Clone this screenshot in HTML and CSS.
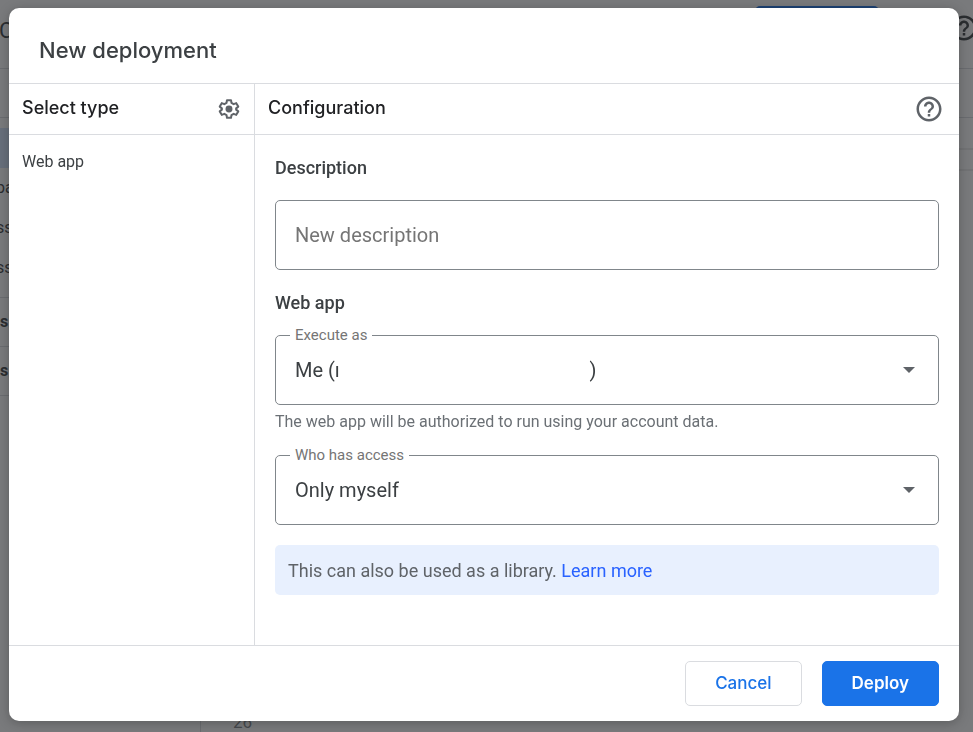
FILE: index.html
```html
<!DOCTYPE html>
<html lang="en">
<head>
    <meta charset="UTF-8">
    <meta name="viewport" content="width=device-width, initial-scale=1.0">
    <title>New deployment</title>
    <link rel="stylesheet" href="styles.css">
</head>
<body>
    <!-- Editor behind the dialog -->
    <div class="editor" aria-hidden="true">
        <div class="editor-header">
            <span class="editor-name">C</span>
            <span class="editor-deploy"></span>
            <svg class="help-icon" viewBox="0 0 24 24"><path d="M11 18h2v-2h-2v2zm1-16C6.480 2 2 6.480 2 12s4.480 10 10 10 10-4.480 10-10S17.520 2 12 2zm0 18c-4.410 0-8-3.590-8-8s3.590-8 8-8 8 3.590 8 8-3.590 8-8 8zm0-14c-2.210 0-4 1.790-4 4h2c0-1.100.9-2 2-2s2 .9 2 2c0 2-3 1.750-3 5h2c0-2.250 3-2.500 3-5 0-2.210-1.790-4-4-4z"/></svg>
        </div>
        <div class="editor-toolbar"></div>
        <div class="editor-main">
            <div class="files">
                <div class="file active"></div>
                <div class="file">pa</div>
                <div class="file">ss</div>
                <div class="file">ss</div>
                <div class="section">s</div>
                <div class="section">s</div>
            </div>
            <div class="code">
                <div class="code-bar"></div>
                <div class="line-number">26</div>
            </div>
        </div>
    </div>

    <!-- Deployment dialog -->
    <div class="overlay">
        <div class="dialog" role="dialog" aria-labelledby="dialog-title">
            <div class="dialog-header">
                <h1 id="dialog-title">New deployment</h1>
            </div>
            <div class="dialog-body">
                <div class="types">
                    <div class="column-header">
                        <h2>Select type</h2>
                        <button class="icon-button" aria-label="Enable deployment types">
                            <svg class="gear-icon" viewBox="0 0 24 24"><path d="M9.800 2.400h4.400l.5 2.900 2.400 1.400 2.800-1.100 2.200 3.800-2.300 1.900v1.400l2.300 1.900-2.200 3.800-2.800-1.100-2.400 1.400-.5 2.900H9.800l-.5-2.900-2.400-1.400-2.800 1.100-2.200-3.800 2.300-1.900v-1.400L1.900 9.400l2.200-3.800 2.800 1.100 2.400-1.400z" fill="none" stroke="currentColor" stroke-width="2.200" stroke-linejoin="round"/><circle cx="12" cy="12" r="3.800"/></svg>
                        </button>
                    </div>
                    <p class="type-name">Web app</p>
                </div>
                <div class="configuration">
                    <div class="column-header">
                        <h2>Configuration</h2>
                        <button class="icon-button" aria-label="Help">
                            <svg class="help-icon" viewBox="0 0 24 24"><path d="M11 18h2v-2h-2v2zm1-16C6.480 2 2 6.480 2 12s4.480 10 10 10 10-4.480 10-10S17.520 2 12 2zm0 18c-4.410 0-8-3.590-8-8s3.590-8 8-8 8 3.590 8 8-3.590 8-8 8zm0-14c-2.210 0-4 1.790-4 4h2c0-1.100.9-2 2-2s2 .9 2 2c0 2-3 1.750-3 5h2c0-2.250 3-2.500 3-5 0-2.210-1.790-4-4-4z"/></svg>
                        </button>
                    </div>
                    <form class="fields" id="deploy-form">
                        <label class="field-title" for="description">Description</label>
                        <input class="control" type="text" id="description" placeholder="New description">

                        <h3 class="field-title">Web app</h3>
                        <div class="select-field">
                            <label for="execute-as">Execute as</label>
                            <select class="control" id="execute-as">
                                <option>Me (ı&emsp;&emsp;&emsp;&emsp;&emsp;&emsp;&emsp;&emsp;&emsp;&emsp;&emsp;&emsp;&nbsp;)</option>
                            </select>
                            <svg class="arrow" viewBox="0 0 12 6"><path d="M0 0h12L6 6z"/></svg>
                        </div>
                        <p class="hint">The web app will be authorized to run using your account data.</p>
                        <div class="select-field">
                            <label for="access">Who has access</label>
                            <select class="control" id="access">
                                <option>Only myself</option>
                            </select>
                            <svg class="arrow" viewBox="0 0 12 6"><path d="M0 0h12L6 6z"/></svg>
                        </div>
                        <p class="notice">This can also be used as a library. <a href="#">Learn more</a></p>
                    </form>
                </div>
            </div>
            <div class="dialog-footer">
                <button class="btn btn-cancel" type="button">Cancel</button>
                <button class="btn btn-deploy" type="submit" form="deploy-form">Deploy</button>
            </div>
        </div>
    </div>
</body>
</html>
```
FILE: styles.css
```css
* {
    box-sizing: border-box;
}
body {
    margin: 0;
    height: 100vh;
    overflow: hidden;
    font-family: Roboto, sans-serif;
    color: #3c4043;
    background-color: #fff;
}
h1, h2, h3, p {
    margin: 0;
}
button, input, select {
    font-family: inherit;
    color: inherit;
}
svg {
    display: block;
    fill: currentColor;
}

/* Editor behind the dialog */
.editor {
    display: flex;
    flex-direction: column;
    height: 100vh;
    margin: 0 -6px 0 -4px;
    color: #3c4043;
}
.editor-header {
    display: flex;
    align-items: flex-start;
    height: 69px;
    border-bottom: 1px solid #dadce0;
}
.editor-name {
    flex: 1;
    padding: 16px 0 0 3px;
    font-size: 22px;
    line-height: 30px;
}
.editor-deploy {
    width: 124px;
    height: 45px;
    margin: 6px 70px 0 0;
    border-radius: 5px;
    background-color: #1a73e8;
}
.editor-header .help-icon {
    margin-top: 13px;
}
.editor-toolbar {
    height: 49px;
    border-bottom: 1px solid #dadce0;
}
.editor-main {
    display: flex;
    flex: 1;
}
.files {
    width: 205px;
    padding-top: 10px;
    border-right: 1px solid #dadce0;
    font-size: 16px;
}
.file {
    height: 40px;
    line-height: 40px;
}
.file.active {
    background-color: #d2e3fc;
}
.section {
    height: 49px;
    line-height: 48px;
    padding-left: 4px;
    border-top: 1px solid #dadce0;
    font-weight: 700;
}
.file + .section {
    margin-top: 9px;
}
.section:last-child {
    height: 50px;
    border-bottom: 1px solid #dadce0;
}
.code {
    display: flex;
    flex-direction: column;
    justify-content: space-between;
    flex: 1;
    padding-top: 30px;
}
.code-bar {
    height: 23px;
    border: solid #ececec;
    border-width: 2px 0;
}
.line-number {
    padding-left: 32px;
    font-size: 17px;
    line-height: 20px;
    color: #80868b;
}

/* Dialog */
.overlay {
    position: fixed;
    inset: 0;
    display: flex;
    padding: 8px 14px 11px 9px;
    background-color: rgba(32, 33, 36, 0.6);
}
.dialog {
    display: flex;
    flex-direction: column;
    flex: 1;
    border-radius: 10px;
    background-color: #fff;
    box-shadow: 0 2px 12px rgba(0, 0, 0, 0.25);
}
.dialog-header {
    padding: 27px 30px 18px;
    border-bottom: 1px solid #dadce0;
}
h1 {
    font-family: Inter, sans-serif;
    font-size: 22px;
    line-height: 30px;
    font-weight: 500;
}
.dialog-body {
    display: flex;
    flex: 1;
}
.types {
    width: 246px;
    border-right: 1px solid #dadce0;
}
.configuration {
    flex: 1;
}
.column-header {
    display: flex;
    align-items: center;
    justify-content: space-between;
    height: 51px;
    padding: 0 14px 0 13px;
    border-bottom: 1px solid #dadce0;
}
h2 {
    padding-bottom: 2px;
    font-family: Inter, sans-serif;
    font-size: 18px;
    line-height: 24px;
    font-weight: 500;
    color: #202124;
}
.configuration .column-header {
    padding-right: 15px;
}
.icon-button {
    padding: 0;
    border: none;
    background: none;
    color: #5f6368;
    cursor: pointer;
}
.help-icon {
    width: 30px;
    height: 30px;
}
.gear-icon {
    width: 22px;
    height: 22px;
}
.type-name {
    padding: 16px 13px;
    font-size: 16px;
    line-height: 22px;
}
.fields {
    display: flex;
    flex-direction: column;
    padding: 21px 20px 0;
}
.field-title {
    font-size: 18px;
    line-height: 24px;
    font-weight: 500;
}
.control {
    width: 100%;
    height: 70px;
    padding: 0 19px;
    border: 1px solid #80868b;
    border-radius: 5px;
    background-color: #fff;
    font-size: 20px;
    appearance: none;
}
input.control {
    margin: 20px 0 21px;
}
.control::placeholder {
    color: #757575;
}
.select-field {
    position: relative;
}
h3.field-title {
    margin-bottom: 20px;
}
.select-field label {
    position: absolute;
    top: -10px;
    left: 15px;
    padding: 0 5px;
    background-color: #fff;
    font-size: 15px;
    line-height: 20px;
    color: #757575;
}
.arrow {
    position: absolute;
    top: 32px;
    right: 24px;
    width: 12px;
    height: 6px;
    color: #5f6368;
    pointer-events: none;
}
.hint {
    margin: 7px 0 23px;
    font-size: 16px;
    line-height: 20px;
    color: #6b7075;
}
.notice {
    margin-top: 20px;
    padding: 14px 13px 12px;
    border-radius: 5px;
    background-color: #e8f0fe;
    font-size: 18px;
    line-height: 24px;
    color: #5f6368;
}
.notice a {
    color: #2962ff;
    text-decoration: none;
}
.dialog-footer {
    display: flex;
    justify-content: flex-end;
    gap: 20px;
    padding: 15px 20px;
    border-top: 1px solid #dadce0;
}
.btn {
    height: 45px;
    padding: 0 29px 2px;
    border: 1px solid #dadce0;
    border-radius: 5px;
    background-color: #fff;
    font-family: Inter, sans-serif;
    font-size: 17px;
    font-weight: 500;
    color: #1a73e8;
    cursor: pointer;
}
.btn-deploy {
    border-color: #1a73e8;
    background-color: #1a73e8;
    font-weight: 600;
    color: #fff;
}
```
